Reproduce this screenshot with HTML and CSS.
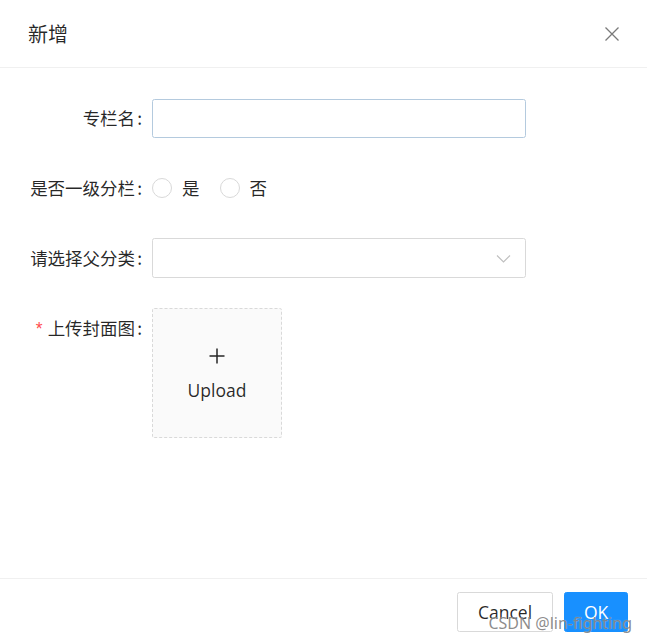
FILE: index.html
```html
<!DOCTYPE html>
<html lang="zh-CN">
<head>
<meta charset="utf-8">
<title>新增</title>
<link rel="stylesheet" href="styles.css">
</head>
<body>
<div class="modal">
  <div class="modal-header">
    <div class="modal-title">新增</div>
    <button class="modal-close" aria-label="Close">
      <svg width="16" height="16" viewBox="0 0 16 16"><path d="M1.5 1.5 L14.5 14.5 M14.5 1.5 L1.5 14.5" stroke="#7a7a7a" stroke-width="1.3" fill="none"/></svg>
    </button>
  </div>
  <div class="modal-body">
    <div class="form-item">
      <label class="form-label">专栏名<span class="colon">:</span></label>
      <div class="form-control"><input class="input input-active" type="text"></div>
    </div>
    <div class="form-item">
      <label class="form-label">是否一级分栏<span class="colon">:</span></label>
      <div class="form-control radios">
        <span class="radio-wrap"><span class="radio"></span><span class="radio-text">是</span></span>
        <span class="radio-wrap"><span class="radio"></span><span class="radio-text">否</span></span>
      </div>
    </div>
    <div class="form-item">
      <label class="form-label">请选择父分类<span class="colon">:</span></label>
      <div class="form-control">
        <div class="select">
          <svg class="select-arrow" width="15" height="15" viewBox="0 0 15 15"><path d="M1 4.5 L7.5 11 L14 4.5" stroke="#bfbfbf" stroke-width="1.1" fill="none"/></svg>
        </div>
      </div>
    </div>
    <div class="form-item form-item-upload">
      <label class="form-label"><span class="required">*</span>上传封面图<span class="colon">:</span></label>
      <div class="form-control">
        <div class="upload">
          <svg width="18" height="18" viewBox="0 0 18 18"><path d="M9 1.5 V16.5 M1.5 9 H16.5" stroke="#262626" stroke-width="1.5" fill="none"/></svg>
          <div class="upload-text">Upload</div>
        </div>
      </div>
    </div>
  </div>
  <div class="modal-footer">
    <button class="btn">Cancel</button>
    <button class="btn btn-primary">OK</button>
  </div>
  <div class="watermark">CSDN @lin-fighting</div>
</div>
</body>
</html>
```
FILE: styles.css
```css
* { box-sizing: border-box; }
html, body { margin: 0; padding: 0; background: #fff; }
body {
  font-family: "Noto Sans CJK SC", "Noto Sans", sans-serif;
  font-size: 17.5px;
  color: rgba(0,0,0,0.85);
}
.modal {
  position: relative;
  width: 647px;
  height: 644px;
  display: flex;
  flex-direction: column;
  background: #fff;
}
.modal-header {
  height: 68px;
  padding: 0 30px 0 28px;
  border-bottom: 1px solid #f0f0f0;
  display: flex;
  align-items: center;
  justify-content: space-between;
}
.modal-title {
  font-size: 20px;
  line-height: 28px;
  color: rgba(0,0,0,0.85);
}
.modal-close {
  border: 0;
  background: none;
  padding: 0;
  margin-right: -3px;
  width: 16px;
  height: 16px;
  display: flex;
}
.modal-body {
  flex: 1;
  padding: 30px 0 0 0;
}
.form-item {
  display: flex;
  height: 40px;
  margin-bottom: 30px;
}
.form-item-upload { height: auto; }
.form-label {
  width: 152px;
  flex: none;
  text-align: right;
  line-height: 40px;
  height: 40px;
  white-space: nowrap;
}
.colon {
  margin: 0 10px 0 2px;
}
.required {
  color: #ff4d4f;
  margin-right: 5px;
  font-family: "SimSun", "Liberation Sans", sans-serif;
  font-size: 17.5px;
}
.form-control {
  width: 374px;
  flex: none;
}
.input {
  display: block;
  width: 374px;
  height: 39px;
  margin-top: 1px;
  border: 1px solid #d9d9d9;
  border-radius: 2.5px;
  outline: none;
  padding: 5px 14px;
  font: inherit;
}
.input-active { border-color: #b4cade; }
.radios {
  display: flex;
  align-items: center;
}
.radio-wrap {
  display: inline-flex;
  align-items: center;
  margin-right: 10px;
}
.radio {
  width: 20px;
  height: 20px;
  border: 1px solid #d9d9d9;
  border-radius: 50%;
  background: #fff;
  display: inline-block;
}
.radio-text {
  padding: 0 10px;
  line-height: 24px;
}
.select {
  position: relative;
  width: 374px;
  height: 40px;
  border: 1px solid #d9d9d9;
  border-radius: 2.5px;
  display: flex;
  align-items: center;
  justify-content: flex-end;
  padding-right: 14px;
}
.upload {
  width: 130px;
  height: 130px;
  background: #fafafa;
  border: 1px dashed #d9d9d9;
  border-radius: 2.5px;
  display: flex;
  flex-direction: column;
  align-items: center;
  justify-content: center;
  padding-top: 4px;
}
.upload-text {
  margin-top: 12px;
  font-family: "Open Sans", "Noto Sans", sans-serif;
  font-size: 17.5px;
  line-height: 26px;
}
.modal-footer {
  height: 66px;
  border-top: 1px solid #f0f0f0;
  display: flex;
  justify-content: flex-end;
  align-items: center;
  padding: 0 19px 0 0;
}
.btn {
  height: 40px;
  padding: 0 19px;
  border: 1px solid #d9d9d9;
  border-radius: 2.5px;
  background: #fff;
  color: rgba(0,0,0,0.85);
  font-family: "Open Sans", "Noto Sans", sans-serif;
  font-size: 17.5px;
  margin-left: 11px;
  margin-top: 1px;
}
.btn:first-child { width: 96px; }
.btn-primary {
  width: 64px;
  background: #1890ff;
  border-color: #1890ff;
  color: #fff;
}
.watermark {
  position: absolute;
  right: 15px;
  bottom: 11px;
  font-family: "Noto Sans", "Open Sans", sans-serif;
  font-size: 16px;
  line-height: 20px;
  color: rgba(120,120,120,0.85);
  text-shadow: 0 0 1px rgba(255,255,255,0.6);
  pointer-events: none;
}
```
